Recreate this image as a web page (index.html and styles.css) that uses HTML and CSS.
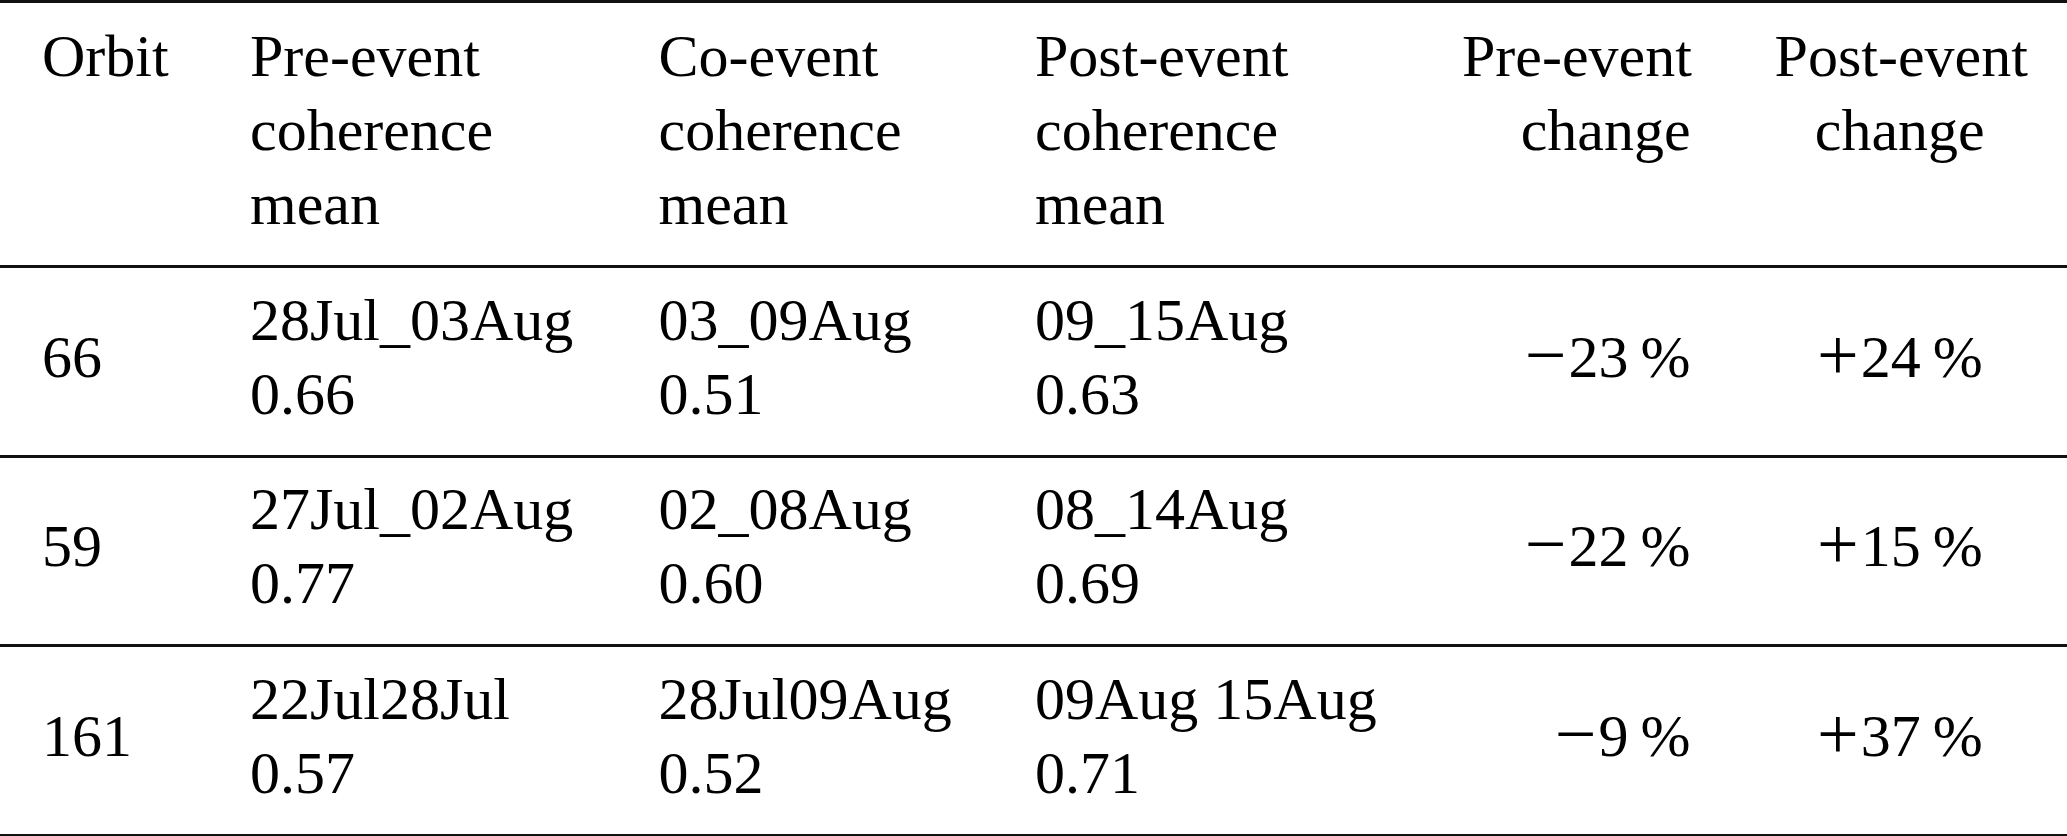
FILE: index.html
```html
<!DOCTYPE html>
<html lang="en">
<head>
  <meta charset="UTF-8">
  <meta name="viewport" content="width=device-width, initial-scale=1.0">
  <title>Coherence change per orbit</title>
  <link rel="stylesheet" href="styles.css">
</head>
<body>
  <table class="coh-table">
    <colgroup>
      <col class="col-orbit">
      <col class="col-pre">
      <col class="col-co">
      <col class="col-post">
      <col class="col-prechg">
      <col class="col-postchg">
    </colgroup>
    <thead>
      <tr>
        <th>Orbit</th>
        <th>Pre-event<br>coherence<br>mean</th>
        <th>Co-event<br>coherence<br>mean</th>
        <th>Post-event<br>coherence<br>mean</th>
        <th class="right">Pre-event<br>change</th>
        <th class="center">Post-event<br>change</th>
      </tr>
    </thead>
    <tbody>
      <tr>
        <td>66</td>
        <td>28Jul_03Aug<br>0.66</td>
        <td>03_09Aug<br>0.51</td>
        <td>09_15Aug<br>0.63</td>
        <td class="right"><span class="sign">&minus;</span>23&#8201;%</td>
        <td class="center"><span class="sign">+</span>24&#8201;%</td>
      </tr>
      <tr>
        <td>59</td>
        <td>27Jul_02Aug<br>0.77</td>
        <td>02_08Aug<br>0.60</td>
        <td>08_14Aug<br>0.69</td>
        <td class="right"><span class="sign">&minus;</span>22&#8201;%</td>
        <td class="center"><span class="sign">+</span>15&#8201;%</td>
      </tr>
      <tr>
        <td>161</td>
        <td>22Jul28Jul<br>0.57</td>
        <td>28Jul09Aug<br>0.52</td>
        <td>09Aug 15Aug<br>0.71</td>
        <td class="right"><span class="sign">&minus;</span>9&#8201;%</td>
        <td class="center"><span class="sign">+</span>37&#8201;%</td>
      </tr>
    </tbody>
  </table>
</body>
</html>
```

FILE: styles.css
```css
body {
  margin: 0;
  padding: 0;
  background: #fff;
  color: #000;
  font-family: "Liberation Serif", "Times New Roman", serif;
}
.coh-table {
  width: 2067px;
  table-layout: fixed;
  border-collapse: separate;
  border-spacing: 0;
  font-size: 60px;
  line-height: 74px;
}
.col-orbit { width: 208px; }
.col-pre { width: 408.5px; }
.col-co { width: 376.5px; }
.col-post { width: 427px; }
.col-prechg { width: 312.6px; }
.col-postchg { width: 334.4px; }

.coh-table th,
.coh-table td {
  padding: 0 42px;
  text-align: left;
  white-space: nowrap;
  font-weight: normal;
}
.coh-table th {
  vertical-align: top;
  padding-top: 16px;
  padding-bottom: 24px;
  border-top: 3px solid #111;
  border-bottom: 3px solid #111;
}
.coh-table td {
  vertical-align: middle;
  padding-top: 14.5px;
  padding-bottom: 24px;
  border-bottom: 3px solid #111;
}
.coh-table .right {
  text-align: right;
}
.coh-table .center {
  text-align: center;
}
/* math-style plus/minus, a bit wider than the text ones */
.sign {
  font-size: 74px;
  line-height: 0;
  vertical-align: -3px;
  margin-right: 2px;
}
```
